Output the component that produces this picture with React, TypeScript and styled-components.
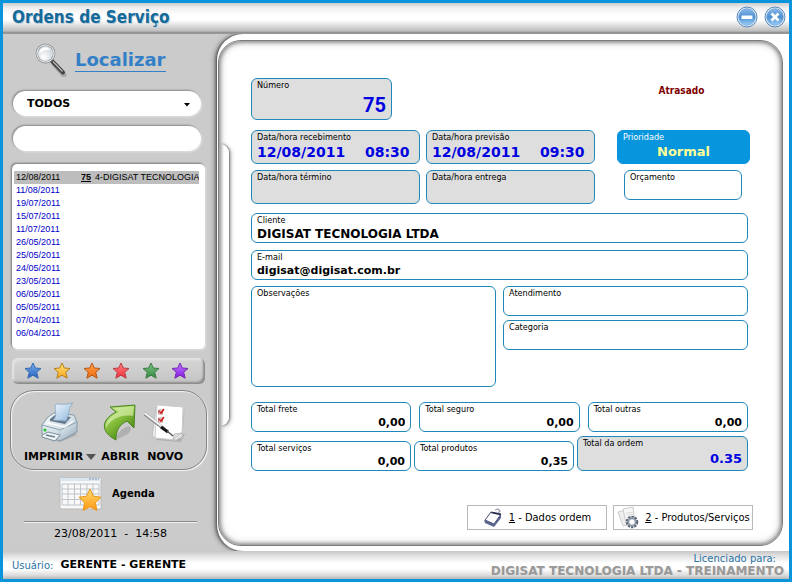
import React from "react";
import styled, { createGlobalStyle, css } from "styled-components";

const wide = '"DejaVu Sans", Verdana, sans-serif';
const narrow = '"DejaVu Sans Condensed", Tahoma, sans-serif';

const Global = createGlobalStyle`
  * { box-sizing: border-box; }
  body { margin: 0; font-family: ${wide}; color: #000; }
  button, input, select, textarea { font: inherit; color: inherit; margin: 0; }
`;

const Window = styled.div`
  min-height: 100vh;
  display: flex;
  flex-direction: column;
  border: 3px solid #0a94dc;
  background: #cbcbcb;
`;

const TitleBar = styled.header`
  display: flex;
  align-items: center;
  justify-content: space-between;
  height: 31px;
  flex: none;
  padding: 0 3px 3px 9px;
  background: linear-gradient(#cdcdcd 0, #f0f0f0 5px, #fff 12px, #fff 17px, #dcdcdc 23px, #bdbdbd 28px, #858585 30px, #a9a9a9 31px);
`;

const Title = styled.h1`
  margin: 0;
  font: bold 17px/24px ${narrow};
  color: #146a9a;
  text-shadow: 1px 1px 1px #b5cbd8;
`;

const WindowButtons = styled.div`
  display: flex;
  gap: 6px;
`;

const PlainButton = styled.button`
  border: 0;
  padding: 0;
  background: none;
  display: flex;
  align-items: center;
  cursor: pointer;
`;

const Body = styled.div`
  flex: 1;
  display: grid;
  grid-template-columns: 214px minmax(0, 1fr);
`;

const Sidebar = styled.aside`
  display: flex;
  flex-direction: column;
  padding: 8px 10px 0 7px;
`;

const Search = styled.a`
  display: flex;
  align-items: center;
  gap: 7px;
  height: 36px;
  padding-left: 24px;
  color: #3480c8;
  font: bold 18px/22px ${wide};
  text-decoration: none;
`;

const SearchText = styled.span`
  border-bottom: 1px solid #3480c8;
`;

const pill = css`
  width: 100%;
  height: 25px;
  border: 0;
  border-radius: 13px;
  background: #fff;
  box-shadow: -1px -1px 2px #888, 1px 1px 2px #e6e6e6;
`;

const Filters = styled.div`
  display: flex;
  flex-direction: column;
  gap: 10px;
  padding: 13px 6px 0 3px;
`;

const SelectWrap = styled.div`
  position: relative;
  display: flex;
`;

const Select = styled.select`
  ${pill}
  appearance: none;
  padding: 1px 14px 0;
  font: bold 11px/16px ${wide};
`;

const SelectArrow = styled.svg`
  position: absolute;
  right: 11px;
  top: 12px;
  pointer-events: none;
`;

const SearchInput = styled.input`
  ${pill}
  padding: 0 14px;
  font-size: 11px;
`;

const ListBox = styled.div`
  margin: 13px 2px 0;
  min-height: 185px;
  padding: 7px 6px 0 2px;
  border-radius: 5px;
  background: #fff;
  box-shadow: -1px -1px 2px #777, 1px 1px 2px #e6e6e6;
`;

const List = styled.table`
  width: 100%;
  table-layout: fixed;
  border-collapse: collapse;
  font: 9px/13px "Liberation Sans", Arial, sans-serif;
`;

const ListRow = styled.tr<{ $selected?: boolean }>`
  color: ${(p) => (p.$selected ? "#000" : "#0000c8")};
  background: ${(p) => (p.$selected ? "#bdbdbd" : "#fff")};
`;

const Cell = styled.td<{ $strong?: boolean }>`
  padding: 0 2px;
  height: 13px;
  overflow: hidden;
  white-space: nowrap;
  font-weight: ${(p) => (p.$strong ? "bold" : "normal")};
  text-decoration: ${(p) => (p.$strong ? "underline" : "none")};
`;

const StarBar = styled.div`
  display: flex;
  justify-content: space-between;
  align-items: center;
  height: 26px;
  margin: 9px 2px 0;
  padding: 0 16px 0 12px;
  border-radius: 6px;
  background: linear-gradient(#d6d6d6, #c4c4c4);
  box-shadow: inset -2px -2px 2px #8c8c8c, inset 2px 2px 2px #e4e4e4;
`;

const Actions = styled.div`
  display: flex;
  gap: 5px;
  height: 80px;
  margin-top: 6px;
  padding: 11px 0 0 13px;
  border: 1px solid #858585;
  border-radius: 24px;
  box-shadow: inset 1px 1px 1px #f4f4f4, 1px 1px 1px #f4f4f4;
`;

const Action = styled(PlainButton)`
  flex-direction: column;
  justify-content: flex-start;
  gap: 6px;
  font: bold 11px/14px ${wide};
`;

const ActionText = styled.span`
  display: flex;
  align-items: center;
  gap: 3px;
`;

const Agenda = styled(PlainButton)`
  gap: 9px;
  margin: 6px 0 0 49px;
  font: bold 10px/14px ${wide};
`;

const Clock = styled.time`
  margin: 9px 10px 0 14px;
  padding-top: 4px;
  border-top: 1px solid #888;
  box-shadow: inset 0 1px #f2f2f2;
  text-align: center;
  font-size: 11px;
  line-height: 15px;
  white-space: pre;
`;

const Frame = styled.main`
  position: relative;
  display: flex;
  padding: 6px 6px 5px 1px;
  border-radius: 26px 0 0 26px;
  background: #fff;
  box-shadow: -1px 0 3px #444, -3px 0 5px #999;
  clip-path: inset(0 0 0 -10px);
`;

const Panel = styled.form`
  flex: 1;
  min-width: 0;
  display: flex;
  flex-direction: column;
  padding: 37px 29px 15px 32px;
  border: 1px solid #7c7c7c;
  border-radius: 23px;
  background: #fff;
  box-shadow: inset 0 0 4px 1px #777, inset 0 0 8px 1px #ccc;
`;

const Handle = styled.button`
  position: absolute;
  left: 3px;
  top: 110px;
  width: 9px;
  height: 282px;
  padding: 0;
  border: 0;
  border-radius: 0 9px 9px 0;
  background: linear-gradient(90deg, #aaa, #fff 4px);
  box-shadow: 1px 0 2px #777, 2px 1px 4px #bbb;
`;

const Row = styled.div<{ $cols: string; $gap: number; $top: number; $end?: number }>`
  display: grid;
  grid-template-columns: ${(p) => p.$cols};
  column-gap: ${(p) => p.$gap}px;
  align-items: end;
  margin-top: ${(p) => p.$top}px;
  padding-right: ${(p) => p.$end ?? 5}px;
`;

const Stack = styled.div`
  display: flex;
  flex-direction: column;
  align-self: start;
  gap: 4px;
`;

const Inset = styled.div<{ $left: number; $right: number }>`
  align-self: start;
  min-width: 0;
  padding: 0 ${(p) => p.$right}px 0 ${(p) => p.$left}px;
`;

type Tone = "white" | "gray" | "blue";

const Box = styled.div<{ $tone: Tone; $height: number }>`
  display: flex;
  flex-direction: column;
  min-width: 0;
  min-height: ${(p) => p.$height}px;
  padding: 0 5px;
  border: 1px solid ${(p) => (p.$tone === "blue" ? "#0795dd" : "#2088b8")};
  border-radius: 6px;
  color: ${(p) => (p.$tone === "blue" ? "#fff" : "#000")};
  background: ${(p) => ({ white: "#fff", gray: "#dedede", blue: "#0795dd" })[p.$tone]};
`;

const Label = styled.label`
  font: 9px/12px ${narrow};
`;

const Values = styled.div`
  display: flex;
  gap: 11px;
`;

const Value = styled.input<{ $size: number; $line: number; $align?: string; $color?: string; $face?: string; $width?: number }>`
  flex: ${(p) => (p.$width ? "none" : "1")};
  width: ${(p) => p.$width ?? 0}px;
  min-width: 0;
  height: ${(p) => p.$line}px;
  padding: 0;
  border: 0;
  outline: 0;
  background: none;
  text-align: ${(p) => p.$align ?? "left"};
  color: ${(p) => p.$color ?? "#000"};
  font: bold ${(p) => p.$size}px/${(p) => p.$line}px ${(p) => p.$face ?? wide};
`;

const Notes = styled.textarea`
  flex: 1;
  resize: none;
  border: 0;
  outline: 0;
  padding: 0;
  background: none;
  font-size: 11px;
`;

const Status = styled.output`
  align-self: start;
  margin-top: 6px;
  text-align: center;
  color: #800000;
  font: bold 10px/13px ${narrow};
`;

const Tabs = styled.div`
  display: flex;
  justify-content: flex-end;
  gap: 6px;
  margin-top: auto;
`;

const Tab = styled.button`
  display: flex;
  align-items: center;
  justify-content: center;
  gap: 6px;
  width: 140px;
  height: 25px;
  padding: 0;
  border: 1px solid #b8b8b8;
  background: #fff;
  font: 11px/16px ${narrow};
  white-space: nowrap;
`;

const Footer = styled.footer`
  display: flex;
  align-items: center;
  justify-content: space-between;
  height: 28px;
  flex: none;
  padding: 0 5px 0 9px;
  background: linear-gradient(#c6c6c6 0, #e2e2e2 5px, #fff 12px, #fff 18px, #dedede 24px, #b8b8b8 28px);
`;

const User = styled.div`
  display: flex;
  align-items: center;
  gap: 7px;
  color: #2c74a4;
  font-size: 10px;
`;

const UserName = styled.strong`
  color: #000;
  font-size: 11px;
  line-height: 14px;
`;

const License = styled.div`
  display: flex;
  flex-direction: column;
  align-items: flex-end;
  color: #2c74a4;
  font-size: 10px;
  line-height: 11px;
`;

const LicenseFor = styled.span`
  padding-right: 8px;
`;

const Licensee = styled.strong`
  color: #999;
  font-size: 12px;
  line-height: 14px;
  text-shadow: 1px 1px 1px #ddd;
`;

function WindowIcon({ close }: { close?: boolean }) {
  return (
    <svg width="22" height="22" viewBox="0 0 22 22">
      <defs>
        <linearGradient id="orb" x1="0" y1="0" x2="0" y2="1">
          <stop offset="0" stopColor="#8ab9ea" />
          <stop offset=".5" stopColor="#4e8dd2" />
          <stop offset="1" stopColor="#9bd0fa" />
        </linearGradient>
      </defs>
      <circle cx="11" cy="11" r="10" fill="#e6f1fb" stroke="#5488bd" />
      <circle cx="11" cy="11" r="8.3" fill="url(#orb)" stroke="#6c9ccf" strokeWidth=".7" />
      {close ? (
        <path d="M7.5 7.5l7 7m0-7l-7 7" stroke="#fff" strokeWidth="2.8" />
      ) : (
        <rect x="5.5" y="9.5" width="11" height="3.4" rx=".5" fill="#fff" />
      )}
    </svg>
  );
}

function Magnifier() {
  return (
    <svg width="34" height="34" viewBox="0 0 34 34">
      <defs>
        <radialGradient id="lens" cx=".4" cy=".7">
          <stop offset="0" stopColor="#fff" />
          <stop offset="1" stopColor="#d4dbe0" />
        </radialGradient>
      </defs>
      <path d="M20 21L30 32" stroke="#aaa" strokeWidth="5" strokeLinecap="round" />
      <path d="M17.5 17.5L29 29.5" stroke="#444" strokeWidth="4" strokeLinecap="round" />
      <path d="M19 18.5L28.5 28.5" stroke="#bbb" strokeWidth="1.2" />
      <circle cx="11.5" cy="10.5" r="8.7" fill="url(#lens)" stroke="#8d9296" strokeWidth="2.4" />
      <circle cx="11.5" cy="10.5" r="8.6" fill="none" stroke="#f5f5f5" strokeWidth="1" />
      <path d="M5.5 10a6 6 0 0 1 11-3Q11 6 5.500 10" fill="#fff" />
    </svg>
  );
}

const starPath = "M9 1l2.300 5 5.700.5-4.300 3.800 1.500 5.900L9 13.200l-5.200 3 1.500-5.900L1 6.500 6.700 6z";

function Star({ from, to, line }: { from: string; to: string; line: string }) {
  const id = `star-${line.slice(1)}`;
  return (
    <svg width="18" height="18" viewBox="0 0 18 18">
      <defs>
        <linearGradient id={id} x1="0" y1="0" x2="0" y2="1">
          <stop offset="0" stopColor={from} />
          <stop offset="1" stopColor={to} />
        </linearGradient>
      </defs>
      <path d={starPath} fill={`url(#${id})`} stroke={line} strokeLinejoin="round" />
    </svg>
  );
}

function Printer() {
  return (
    <svg width="38" height="42" viewBox="0 0 38 42">
      <defs>
        <linearGradient id="shell" x1="0" y1="0" x2="1" y2="1">
          <stop offset="0" stopColor="#f7fbfd" />
          <stop offset=".6" stopColor="#cfdce5" />
          <stop offset="1" stopColor="#8fa5b4" />
        </linearGradient>
        <linearGradient id="sheet" x1="0" y1="0" x2="1" y2="1">
          <stop offset="0" stopColor="#f3f9ff" />
          <stop offset="1" stopColor="#8db6dc" />
        </linearGradient>
      </defs>
      <path d="M4 36l15 4 17-7-4-3z" fill="#999" opacity=".6" />
      <path d="M7 15l6-4 20 2 3 7v10l-17 9L1 32V23z" fill="url(#shell)" stroke="#8498a6" />
      <path d="M1 23l18 5 17-8" fill="none" stroke="#8fa2b0" />
      <path d="M19 28v10" stroke="#b3c3ce" />
      <path d="M9 17l5-4 16 2-6 7-15-3z" fill="#65788a" />
      <path d="M12 18C18 13 12 7 15 2q9 1 17-1c-5 5-3 10-7 18z" fill="url(#sheet)" stroke="#89a6bf" strokeWidth=".8" />
      <path d="M6 21l18 4 8-6" fill="none" stroke="#fff" strokeWidth="1.500" />
      <path d="M1 33l6-3 12 3-5 6L1 35z" fill="#f0f5f8" stroke="#798d9b" />
      <path d="M5 33l9 2" stroke="#6e808d" strokeWidth="1.500" />
      <circle cx="4" cy="28" r="1.600" fill="#25c425" />
    </svg>
  );
}

function OpenArrow() {
  return (
    <svg width="36" height="42" viewBox="0 0 36 42">
      <defs>
        <linearGradient id="leaf" x1="0" y1="0" x2=".7" y2="1">
          <stop offset="0" stopColor="#c6e888" />
          <stop offset=".5" stopColor="#83bd3a" />
          <stop offset="1" stopColor="#437f13" />
        </linearGradient>
      </defs>
      <path d="M14 37q4-12 14-13 4 8-14 13" fill="#888" opacity=".4" />
      <path d="M8 5L33 3 32 26l-7-7c-8 4-11 9-11 19C0 31-3 19 14 10z" fill="url(#leaf)" stroke="#4c8522" strokeLinejoin="round" />
      <path d="M11 6L32 4 31 14C20 12 8 17 4 26 3 20 8 14 17 10z" fill="#e4f6bd" opacity=".6" />
    </svg>
  );
}

function NewSheet() {
  return (
    <svg width="42" height="42" viewBox="0 0 42 42">
      <path d="M12 38l25 2 4-8-26-3z" fill="#888" opacity=".4" />
      <path d="M12 5l28 2-2 29-30-1z" fill="#eee" stroke="#bbb" />
      <path d="M13 3l26 2-1 28-6 5-21-2z" fill="#fff" stroke="#ccc" />
      <path d="M38 31l-8 1-1 6z" fill="#ddd" stroke="#aaa" strokeWidth=".7" />
      <path d="M14.500 8h4v4h-4zM14.500 16h4v4h-4z" fill="#fff" stroke="#b88" />
      <path d="M15 9l2 2 3-4M15 17l2 2 3-4" fill="none" stroke="#d21818" strokeWidth="1.500" />
      <path d="M1 12l18 14" stroke="#888" strokeWidth="3.400" strokeLinecap="round" />
      <path d="M1 11.500l17 13" stroke="#f5f5f5" strokeWidth="2" strokeLinecap="round" />
      <path d="M17 25l7 5" stroke="#151515" strokeWidth="3" />
      <path d="M23 29l6 5" stroke="#555" strokeWidth="1.500" />
    </svg>
  );
}

function Calendar() {
  return (
    <svg width="44" height="36" viewBox="0 0 44 36">
      <defs>
        <linearGradient id="gold" x1="0" y1="0" x2="0" y2="1">
          <stop offset="0" stopColor="#ffe070" />
          <stop offset="1" stopColor="#ff9411" />
        </linearGradient>
      </defs>
      <path d="M1 2h41v31H1z" fill="#f8f8f8" stroke="#bbb" />
      <path d="M1 2h41v3H1z" fill="#d9e4ef" />
      <path d="M30 3h10" stroke="#7894ad" strokeDasharray="2 1" />
      <path d="M3 8h37v21H3zM3 13h37M3 18h37M3 23.500h37M9 8v21M15.500 8v21M21.500 8v21M28 8v21M34 8v21" fill="none" stroke="#bfc5ca" />
      <path d="M31 13l3.400 7.200 7.600 1-5.500 5.600 1.300 7.700-6.800-3.700-6.900 3.700 1.400-7.700-5.500-5.600 7.600-1z" fill="url(#gold)" stroke="#e8971c" strokeLinejoin="round" />
    </svg>
  );
}

function Clipboard() {
  return (
    <svg width="20" height="20" viewBox="0 0 20 20">
      <path d="M1 12l1 3 9 4 7-9V5l-7 10z" fill="#5b6694" />
      <path d="M8 4l10 2-7 10-9-4z" fill="#fff" stroke="#4b547a" />
      <path d="M8.500 4.500l9 2" stroke="#222b44" strokeWidth="1.600" />
      <path d="M12 2l3-1 2 2-2 2" fill="none" stroke="#9aa0ad" strokeWidth="1.300" />
    </svg>
  );
}

function SheetsGear() {
  return (
    <svg width="23" height="23" viewBox="0 0 23 23">
      <path d="M2 6l8-2 4 14-7 2z" fill="#eee" stroke="#ccc" />
      <path d="M7 3l10-2 2 14-9 2z" fill="#f7f7f7" stroke="#ccc" />
      <path d="M10 7l8-1M11 9l7-1" stroke="#ddd" />
      <circle cx="16" cy="16" r="5" fill="none" stroke="#59616f" strokeWidth="2.500" strokeDasharray="2.200 1" />
      <circle cx="16" cy="16" r="3.700" fill="#fff" stroke="#8994a8" strokeWidth="2" />
    </svg>
  );
}

interface FieldProps {
  id: string;
  label: string;
  values?: string[];
  widths?: number[];
  tone?: Tone;
  height?: number;
  size?: number;
  line?: number;
  align?: string;
  color?: string;
  face?: string;
}

function Field({ id, label, values = [""], widths = [], tone = "white", height = 30, size = 11, line = 16, align, color, face }: FieldProps) {
  return (
    <Box $tone={tone} $height={height}>
      <Label htmlFor={id}>{label}</Label>
      <Values>
        {values.map((value, i) => (
          <Value
            key={i}
            id={i ? `${id}-${i}` : id}
            aria-label={i ? `${label} - hora` : undefined}
            defaultValue={value}
            $size={size}
            $line={line}
            $align={align}
            $color={color}
            $face={face}
            $width={widths[i]}
          />
        ))}
      </Values>
    </Box>
  );
}

const dates = [
  "11/08/2011", "19/07/2011", "15/07/2011", "11/07/2011", "26/05/2011", "25/05/2011",
  "24/05/2011", "23/05/2011", "06/05/2011", "05/05/2011", "07/04/2011", "06/04/2011",
];

const stars = [
  { name: "azul", from: "#79adf0", to: "#2863bd", line: "#376ab0" },
  { name: "amarela", from: "#ffe27a", to: "#f8a81b", line: "#b87d1d" },
  { name: "laranja", from: "#ffa04c", to: "#ef6c0a", line: "#b2591c" },
  { name: "vermelha", from: "#ff8484", to: "#ef2d38", line: "#b83e42" },
  { name: "verde", from: "#7cc283", to: "#358a40", line: "#3e7c45" },
  { name: "roxa", from: "#c37bff", to: "#8418e2", line: "#7429ad" },
];

const blue = "#0000e0";

export default function App() {
  return (
    <>
      <Global />
      <Window>
        <TitleBar>
          <Title>Ordens de Serviço</Title>
          <WindowButtons>
            <PlainButton aria-label="Minimizar"><WindowIcon /></PlainButton>
            <PlainButton aria-label="Fechar"><WindowIcon close /></PlainButton>
          </WindowButtons>
        </TitleBar>
        <Body>
          <Sidebar>
            <Search href="#localizar">
              <Magnifier />
              <SearchText>Localizar</SearchText>
            </Search>
            <Filters>
              <SelectWrap>
                <Select aria-label="Filtro" defaultValue="TODOS">
                  <option>TODOS</option>
                </Select>
                <SelectArrow width="6" height="4" viewBox="0 0 6 4"><path d="M0 0h6L3 3.500z" /></SelectArrow>
              </SelectWrap>
              <SearchInput aria-label="Pesquisa" />
            </Filters>
            <ListBox>
              <List>
                <colgroup>
                  <col width="65" />
                  <col width="14" />
                  <col />
                </colgroup>
                <tbody>
                  <ListRow $selected>
                    <Cell>12/08/2011</Cell>
                    <Cell $strong>75</Cell>
                    <Cell>4-DIGISAT TECNOLOGIA</Cell>
                  </ListRow>
                  {dates.map((date) => (
                    <ListRow key={date}>
                      <Cell colSpan={3}>{date}</Cell>
                    </ListRow>
                  ))}
                </tbody>
              </List>
            </ListBox>
            <StarBar>
              {stars.map(({ name, ...colors }) => (
                <PlainButton key={name} aria-label={`Estrela ${name}`}><Star {...colors} /></PlainButton>
              ))}
            </StarBar>
            <Actions>
              <Action>
                <Printer />
                <ActionText>
                  IMPRIMIR
                  <svg width="10" height="6" viewBox="0 0 10 6"><path d="M0 0h10L5 6z" fill="#555" /></svg>
                </ActionText>
              </Action>
              <Action><OpenArrow />ABRIR</Action>
              <Action><NewSheet />NOVO</Action>
            </Actions>
            <Agenda><Calendar />Agenda</Agenda>
            <Clock>{"23/08/2011  -  14:58"}</Clock>
          </Sidebar>
          <Frame>
            <Panel onSubmit={(e) => e.preventDefault()}>
              <Row $cols="141fr 213fr 133fr" $gap={5} $top={0}>
                <Field id="numero" label="Número" values={["75"]} tone="gray" height={42} size={20} line={28} align="right" color={blue} face='Impact, Roboto, sans-serif' />
                <span />
                <Status>Atrasado</Status>
              </Row>
              <Row $cols="169fr 169fr 149fr" $gap={6} $top={10} $end={3}>
                <Field id="recebimento" label="Data/hora recebimento" values={["12/08/2011", "08:30"]} widths={[97]} tone="gray" height={34} size={14} line={18} color={blue} />
                <Field id="previsao" label="Data/hora previsão" values={["12/08/2011", "09:30"]} widths={[97]} tone="gray" height={34} size={14} line={18} color={blue} />
                <Inset $left={16} $right={0}>
                  <Field id="prioridade" label="Prioridade" values={["Normal"]} tone="blue" height={34} size={13} line={18} align="center" color="#ffff99" />
                </Inset>
              </Row>
              <Row $cols="169fr 169fr 149fr" $gap={6} $top={6} $end={3}>
                <Field id="termino" label="Data/hora término" tone="gray" height={34} />
                <Field id="entrega" label="Data/hora entrega" tone="gray" height={34} />
                <Inset $left={23} $right={8}>
                  <Field id="orcamento" label="Orçamento" />
                </Inset>
              </Row>
              <Row $cols="1fr" $gap={0} $top={9}>
                <Field id="cliente" label="Cliente" values={["DIGISAT TECNOLOGIA LTDA"]} size={12} />
              </Row>
              <Row $cols="1fr" $gap={0} $top={7}>
                <Field id="email" label="E-mail" values={["digisat@digisat.com.br"]} />
              </Row>
              <Row $cols="1fr 1fr" $gap={7} $top={6}>
                <Box $tone="white" $height={101}>
                  <Label htmlFor="observacoes">Observações</Label>
                  <Notes id="observacoes" />
                </Box>
                <Stack>
                  <Field id="atendimento" label="Atendimento" />
                  <Field id="categoria" label="Categoria" />
                </Stack>
              </Row>
              <Row $cols="1fr 1fr 1fr" $gap={8} $top={15}>
                <Field id="frete" label="Total frete" values={["0,00"]} align="right" />
                <Field id="seguro" label="Total seguro" values={["0,00"]} align="right" />
                <Field id="outras" label="Total outras" values={["0,00"]} align="right" />
              </Row>
              <Row $cols="160fr 160fr 171fr" $gap={3} $top={4}>
                <Field id="servicos" label="Total serviços" values={["0,00"]} align="right" />
                <Field id="produtos" label="Total produtos" values={["0,35"]} align="right" />
                <Field id="total" label="Total da ordem" values={["0.35"]} tone="gray" height={35} size={13} line={20} align="right" color={blue} />
              </Row>
              <Tabs>
                <Tab><Clipboard /><span><u>1</u> - Dados ordem</span></Tab>
                <Tab><SheetsGear /><span><u>2</u> - Produtos/Serviços</span></Tab>
              </Tabs>
            </Panel>
            <Handle type="button" aria-label="Recolher painel" />
          </Frame>
        </Body>
        <Footer>
          <User>Usuário: <UserName>GERENTE - GERENTE</UserName></User>
          <License>
            <LicenseFor>Licenciado para:</LicenseFor>
            <Licensee>DIGISAT TECNOLOGIA LTDA - TREINAMENTO</Licensee>
          </License>
        </Footer>
      </Window>
    </>
  );
}
